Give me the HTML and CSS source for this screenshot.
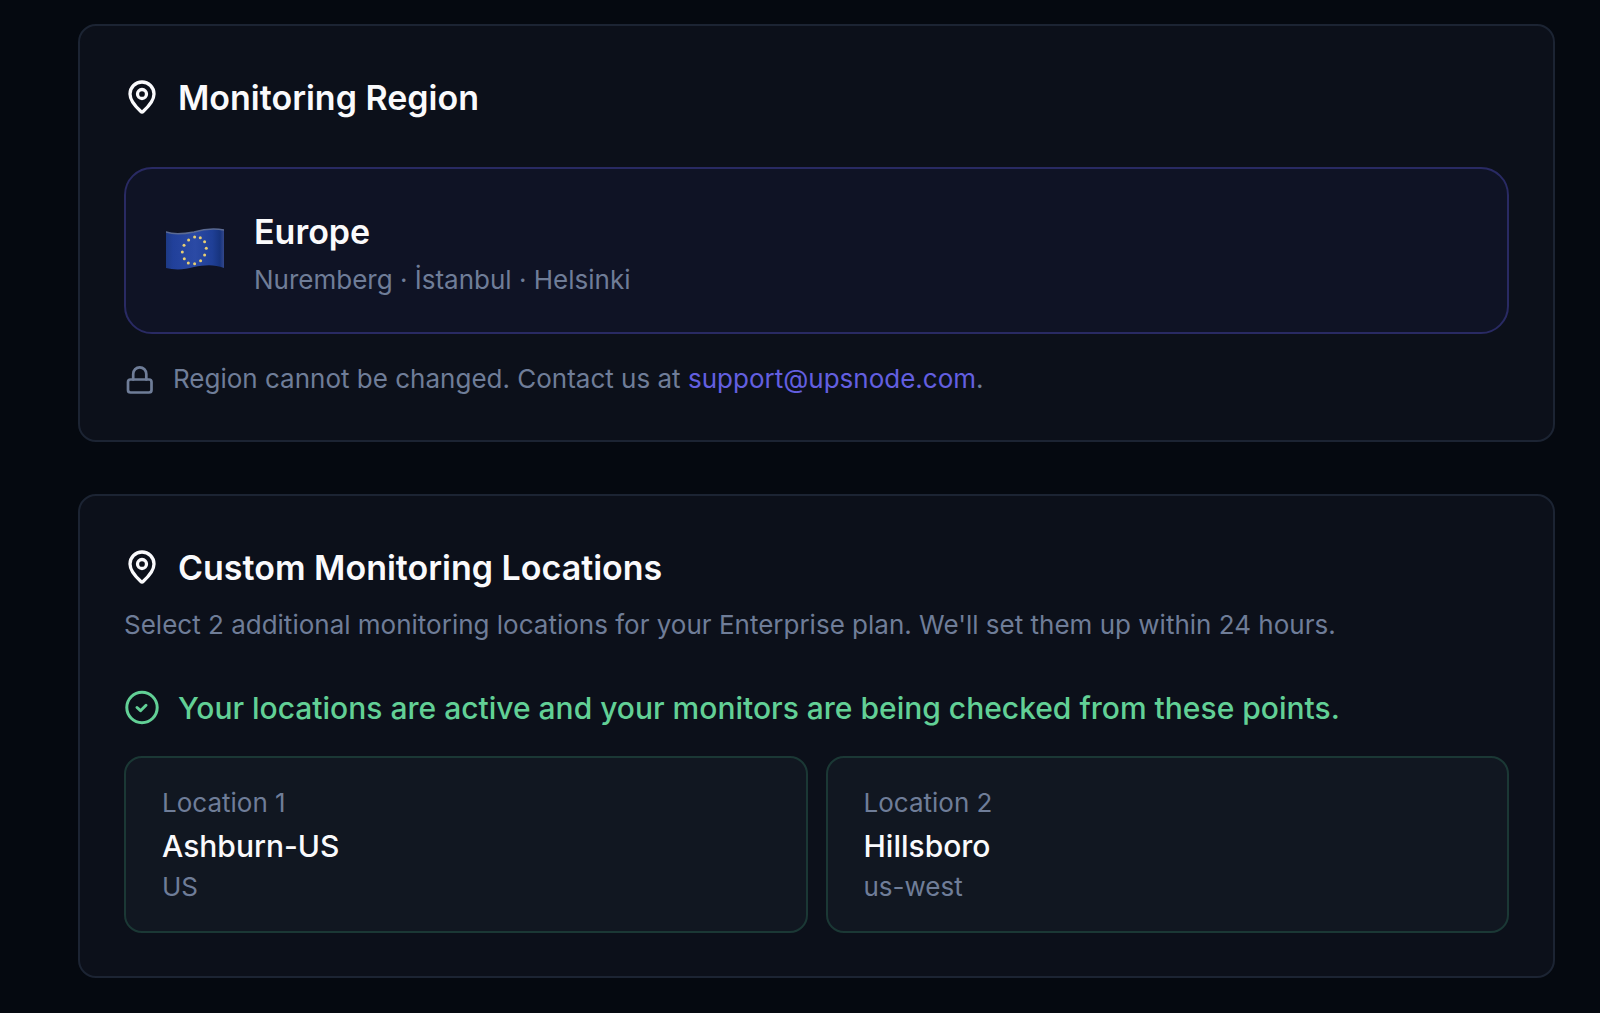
FILE: index.html
```html
<!DOCTYPE html>
<html lang="en">
<head>
<meta charset="utf-8">
<meta name="viewport" content="width=device-width, initial-scale=1">
<title>Monitoring Region</title>
<link rel="stylesheet" href="styles.css">
</head>
<body>
<main class="page">
  <section class="card">
    <h2 class="card-title">
      <svg class="icon-pin" viewBox="0 0 24 24" aria-hidden="true"><path d="M20 10c0 4.400-4.600 9.200-7.100 11.500a1.300 1.300 0 0 1-1.800 0C8.600 19.200 4 14.400 4 10a8 8 0 0 1 16 0Z"/><circle cx="12" cy="10" r="3"/></svg>
      Monitoring Region
    </h2>
    <div class="region">
      <svg class="flag" viewBox="0 0 58 42" role="img" aria-label="Flag of Europe">
        <defs>
          <linearGradient id="cloth" x1="0" x2="1" y1="0" y2="0">
            <stop offset="0" stop-color="#1d3a85"/><stop offset=".12" stop-color="#21409a"/><stop offset=".5" stop-color="#2b4aa5"/><stop offset=".8" stop-color="#1f3f96"/><stop offset=".93" stop-color="#17347e"/><stop offset="1" stop-color="#33478a"/>
          </linearGradient>
        </defs>
        <path d="M0 4C8 7 18 6 28 4 38 1 48 0 58 2V40C48 36 38 37 28 39 18 42 8 42 0 40Z" fill="url(#cloth)"/>
        <path d="M0 4C8 7 18 6 28 4 38 1 48 0 58 2" fill="none" stroke="#5a6a94" stroke-width="1.500"/>
        <g fill="#e8cf73">
          <circle cx="28.600" cy="9" r="1.500"/><circle cx="34.300" cy="9.700" r="1.500"/><circle cx="38.600" cy="13.700" r="1.500"/><circle cx="40.300" cy="20.300" r="1.500"/><circle cx="38.600" cy="27" r="1.500"/><circle cx="34.600" cy="32.700" r="1.500"/><circle cx="28.600" cy="35.700" r="1.500"/><circle cx="22.300" cy="35" r="1.500"/><circle cx="18.300" cy="30.700" r="1.500"/><circle cx="16.300" cy="24" r="1.500"/><circle cx="18" cy="17.300" r="1.500"/><circle cx="22.600" cy="12" r="1.500"/>
        </g>
      </svg>
      <div>
        <h3 class="region-name">Europe</h3>
        <p class="muted">Nuremberg · İstanbul · Helsinki</p>
      </div>
    </div>
    <p class="note muted">
      <svg class="icon-lock" viewBox="0 0 32 32" aria-hidden="true"><rect x="4" y="15.500" width="23.500" height="13" rx="2.500"/><path d="M9.200 15.500V10a6.550 6.700 0 0 1 13.100 0v5.500"/></svg>
      <span>Region cannot be changed. Contact us at <a href="mailto:support@upsnode.com">support@upsnode.com</a>.</span>
    </p>
  </section>

  <section class="card">
    <h2 class="card-title">
      <svg class="icon-pin" viewBox="0 0 24 24" aria-hidden="true"><path d="M20 10c0 4.400-4.600 9.200-7.100 11.500a1.300 1.300 0 0 1-1.800 0C8.600 19.200 4 14.400 4 10a8 8 0 0 1 16 0Z"/><circle cx="12" cy="10" r="3"/></svg>
      Custom Monitoring Locations
    </h2>
    <p class="description muted">Select 2 additional monitoring locations for your Enterprise plan. We'll set them up within 24 hours.</p>
    <p class="status">
      <svg class="icon-check" viewBox="0 0 36 36" aria-hidden="true"><circle cx="18" cy="17.500" r="15.200"/><path d="M13 17.500l3.500 3.200 5.500-5.400"/></svg>
      Your locations are active and your monitors are being checked from these points.
    </p>
    <ul class="locations">
      <li class="location">
        <p class="muted">Location 1</p>
        <p class="location-name">Ashburn-US</p>
        <p class="muted">US</p>
      </li>
      <li class="location">
        <p class="muted">Location 2</p>
        <p class="location-name">Hillsboro</p>
        <p class="muted">us-west</p>
      </li>
    </ul>
  </section>
</main>
</body>
</html>
```
FILE: styles.css
```css
* { box-sizing: border-box; margin: 0; padding: 0; }

body {
  background: #050910;
  color: #fafafc;
  font-family: Inter, "Liberation Sans", sans-serif;
  font-size: 26px;
  line-height: 36px;
}

svg { flex: none; fill: none; stroke: currentColor; stroke-linecap: round; stroke-linejoin: round; }

.page {
  display: flex;
  flex-direction: column;
  gap: 52px;
  padding: 24px 45px 34px 78px;
}

.card {
  padding: 48px 44px 43px;
  background: #0c101a;
  border: 2px solid #1c2433;
  border-radius: 18px;
}

.card-title {
  display: flex;
  align-items: center;
  gap: 18px;
  font-size: 34px;
  font-weight: 600;
  line-height: 48px;
}

.muted { color: #6f7d98; }

.icon-pin { width: 36px; height: 36px; margin-bottom: 2px; stroke-width: 2.200; }

.region {
  display: flex;
  align-items: center;
  gap: 30px;
  margin-top: 45px;
  padding: 39px 40px 34px;
  background: #0f1325;
  border: 2px solid #292a63;
  border-radius: 28px;
}

.flag { width: 58px; height: 42px; margin-bottom: 8px; stroke: none; }

.region-name {
  margin-bottom: 6px;
  font-size: 34px;
  font-weight: 600;
  line-height: 48px;
}

.note {
  display: flex;
  align-items: center;
  gap: 17px;
  margin-top: 27px;
}

.icon-lock { width: 32px; height: 32px; margin-top: 2px; stroke-width: 2.700; }

.note a { color: #635fe0; text-decoration: none; }

.description { margin-top: 15px; }

.status {
  display: flex;
  align-items: center;
  gap: 18px;
  margin-top: 43px;
  color: #62d096;
  font-size: 30px;
  font-weight: 500;
  line-height: 44px;
}

.icon-check { width: 36px; height: 36px; stroke-width: 3; }

.locations {
  display: grid;
  grid-template-columns: 1fr 1fr;
  gap: 18px;
  margin-top: 26px;
  list-style: none;
}

.location {
  padding: 27px 36px 26px;
  background: #111721;
  border: 2px solid #1b3835;
  border-radius: 18px;
}

.location-name {
  margin: 3px 0 1px;
  font-size: 30px;
  font-weight: 500;
  line-height: 44px;
}
```
